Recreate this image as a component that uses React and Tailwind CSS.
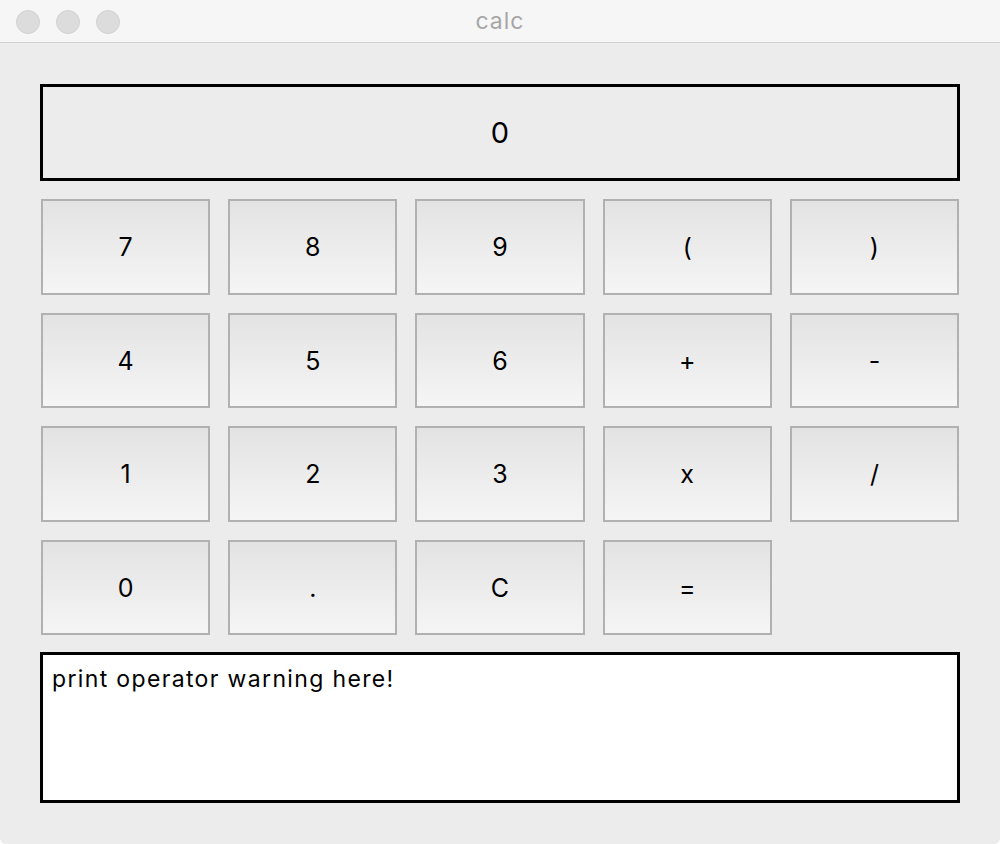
import React from "react";

const keys = ["7","8","9","(",")","4","5","6","+","-","1","2","3","x","/","0",".","C","="];

export default function App() {
  return (
    <div className="w-[1000px] h-[844px] bg-[#ececec] flex flex-col rounded-b-[6px] overflow-hidden" style={{fontFamily: 'Inter, "Liberation Sans", Arial, sans-serif'}}>
      <div className="h-[43px] bg-[#f6f6f6] border-b border-[#d0d0d0] relative flex items-center justify-center shrink-0">
        <div className="absolute left-[16px] top-[10px] flex gap-[16px]">
          <div className="w-[24px] h-[24px] rounded-full bg-[#dcdcdc] border border-[#d1d1d1]" />
          <div className="w-[24px] h-[24px] rounded-full bg-[#dcdcdc] border border-[#d1d1d1]" />
          <div className="w-[24px] h-[24px] rounded-full bg-[#dcdcdc] border border-[#d1d1d1]" />
        </div>
        <span className="text-[23px] text-[#a6a6a6] mt-[1px] tracking-[1px]">calc</span>
      </div>
      <div className="flex flex-col px-[40px] pt-[41px]">
        <div className="h-[97px] border-[3px] border-black flex items-center justify-center text-[29px] text-black pt-[1px]">0</div>
        <div className="grid grid-cols-5 gap-x-[18px] gap-y-[18px] mt-[18px] mx-px">
          {keys.map((k) => (
            <div key={k} className="h-[95.5px] border-2 border-[#b1b1b1] bg-gradient-to-b from-[#e3e3e3] to-[#f5f5f5] flex items-center justify-center text-[25px] text-black pt-[2px]">
              {k}
            </div>
          ))}
        </div>
        <div className="mt-[17px] h-[151px] border-[3px] border-black bg-white px-[9px] pt-[10px] text-[23px] text-black leading-[28px] tracking-[1.35px]">
          print operator warning here!
        </div>
      </div>
    </div>
  );
}
